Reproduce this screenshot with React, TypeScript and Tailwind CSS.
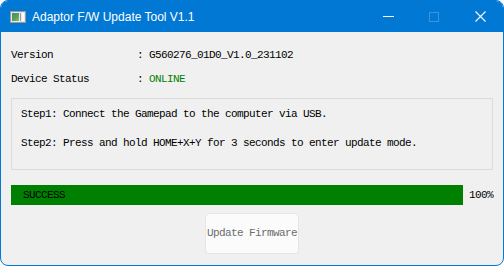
import { useState } from "react";

// small app icon drawn in the title bar
function AppIcon() {
  return (
    <svg width="16" height="12" viewBox="0 0 16 12">
      <rect x="0.5" y="0.5" width="15" height="11" fill="#e8e8e8" stroke="#9a9a9a" />
      <defs>
        <linearGradient id="pic" x1="0" y1="0" x2="1" y2="1">
          <stop offset="0" stopColor="#3f8f7a" />
          <stop offset="0.6" stopColor="#5aa05a" />
          <stop offset="1" stopColor="#9cc46a" />
        </linearGradient>
      </defs>
      <rect x="2" y="2" width="7" height="8" fill="url(#pic)" />
      <rect x="10" y="2" width="1" height="8" fill="#9a9a9a" />
      <rect x="12" y="2" width="2" height="8" fill="#ffffff" />
    </svg>
  );
}

export default function App() {
  const [progress] = useState(100);
  const mono = "font-['Liberation_Mono',monospace] text-[11px] tracking-[-0.6px]";

  return (
    <div className="w-[504px] h-[266px] bg-white">
      <div className="w-full h-full rounded-lg border border-[#0078d4] flex flex-col overflow-hidden bg-[#f0f0f0]">
        {/* title bar */}
        <div className="h-[31px] bg-[#0078d4] flex items-center shrink-0">
          <div className="ml-[9px] mt-[1px] flex items-center">
            <AppIcon />
          </div>
          <span className="ml-[6px] text-white text-[12px] font-['Liberation_Sans',sans-serif]">
            Adaptor F/W Update Tool V1.1
          </span>
          <div className="ml-auto flex items-center h-full">
            <div className="w-[46px] h-full flex items-center justify-center">
              <div className="w-[11px] h-px bg-white" />
            </div>
            <div className="w-[46px] h-full flex items-center justify-center">
              <div className="w-[10px] h-[10px] border border-[#3a95dd]" />
            </div>
            <div className="w-[46px] h-full flex items-center justify-center">
              <svg width="11" height="11" viewBox="0 0 11 11">
                <path d="M0.5 0.5 L10.5 10.5 M10.5 0.5 L0.5 10.5" stroke="#ffffff" strokeWidth="1.1" />
              </svg>
            </div>
          </div>
        </div>

        {/* body */}
        <div className={`flex flex-col px-[10px] pt-[11px] text-black ${mono}`}>
          <div className="h-[24px] flex items-center">
            <span className="w-[126px]">Version</span>
            <span className="w-[12px]">:</span>
            <span>G560276_01D0_V1.0_231102</span>
          </div>
          <div className="h-[24px] flex items-center">
            <span className="w-[126px]">Device Status</span>
            <span className="w-[12px]">:</span>
            <span className="text-[#008000]">ONLINE</span>
          </div>

          <div className="mt-[7px] h-[72px] border border-[#dcdcdc] px-[9px] pt-[7px] flex flex-col gap-[13px]">
            <div className="h-[16px] flex items-center">
              Step1: Connect the Gamepad to the computer via USB.
            </div>
            <div className="h-[16px] flex items-center">
              Step2: Press and hold HOME+X+Y for 3 seconds to enter update mode.
            </div>
          </div>

          <div className="mt-[15px] flex items-center">
            <div className="w-[453px] h-[20px] bg-[#e6e6e6] relative">
              <div className="h-full bg-[#008000]" style={{ width: `${progress}%` }} />
              <span className="absolute left-[12px] top-0 h-full flex items-center">SUCCESS</span>
            </div>
            <span className="ml-[6px]">{progress}%</span>
          </div>

          <div className="mt-[8px] flex justify-center">
            <button
              type="button"
              className="w-[94px] h-[41px] rounded-[4px] border border-[#e5e5e5] bg-[#fbfbfb] text-[#6d6d6d] whitespace-nowrap flex items-center justify-center"
            >
              Update Firmware
            </button>
          </div>
        </div>
      </div>
    </div>
  );
}
